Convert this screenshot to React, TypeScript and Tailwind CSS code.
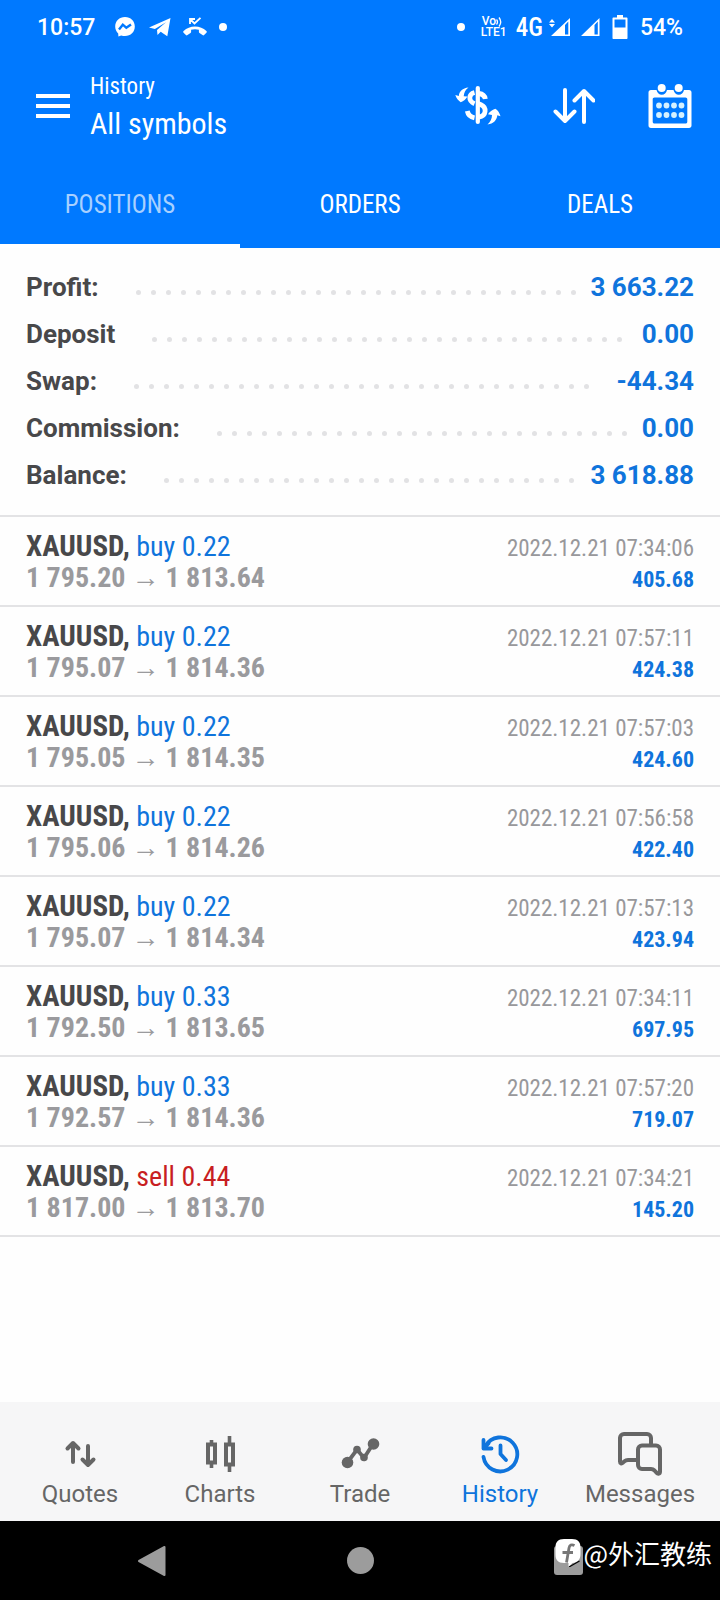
import React from "react";

type Deal = {
  side: "buy" | "sell";
  volume: string;
  open: string;
  close: string;
  time: string;
  profit: string;
};

const summary = [
  { label: "Profit:", value: "3 663.22" },
  { label: "Deposit", value: "0.00" },
  { label: "Swap:", value: "-44.34" },
  { label: "Commission:", value: "0.00" },
  { label: "Balance:", value: "3 618.88" },
];

const deals: Deal[] = [
  { side: "buy", volume: "0.22", open: "1 795.20", close: "1 813.64", time: "2022.12.21 07:34:06", profit: "405.68" },
  { side: "buy", volume: "0.22", open: "1 795.07", close: "1 814.36", time: "2022.12.21 07:57:11", profit: "424.38" },
  { side: "buy", volume: "0.22", open: "1 795.05", close: "1 814.35", time: "2022.12.21 07:57:03", profit: "424.60" },
  { side: "buy", volume: "0.22", open: "1 795.06", close: "1 814.26", time: "2022.12.21 07:56:58", profit: "422.40" },
  { side: "buy", volume: "0.22", open: "1 795.07", close: "1 814.34", time: "2022.12.21 07:57:13", profit: "423.94" },
  { side: "buy", volume: "0.33", open: "1 792.50", close: "1 813.65", time: "2022.12.21 07:34:11", profit: "697.95" },
  { side: "buy", volume: "0.33", open: "1 792.57", close: "1 814.36", time: "2022.12.21 07:57:20", profit: "719.07" },
  { side: "sell", volume: "0.44", open: "1 817.00", close: "1 813.70", time: "2022.12.21 07:34:21", profit: "145.20" },
];

function StatusBar() {
  return (
    <div className="flex h-[54px] items-center justify-between px-[37px] text-[23px] font-medium leading-none">
      <div className="flex items-center">
        <span>10:57</span>
        <svg className="ml-5 h-5 w-5" viewBox="0 0 20 20" aria-hidden="true">
          <path fill="#fff" d="M10 0C4.300 0 .2 4.100.2 9.500c0 2.800 1.100 5.200 3 6.900l.2 3.200 2.800-1.200c1.200.4 2.500.6 3.800.6 5.700 0 9.800-4.100 9.800-9.500S15.700 0 10 0Z" />
          <path d="m4 12.500 3.800-4.800 3.500 3 4.700-3.300" fill="none" stroke="#0079ff" strokeWidth="2.400" />
        </svg>
        <svg className="ml-[14px] h-5 w-[22px]" viewBox="0 0 22 20" aria-hidden="true">
          <path fill="#fff" d="M0 10.600 21.500 1 18.300 19.300 11.700 14.700 8.500 18 8 12.900 17 5.200 5.900 12.100Z" />
        </svg>
        <svg className="ml-3 h-5 w-6" viewBox="0 0 24 20" aria-hidden="true">
          <path fill="#fff" d="M12 9.500c4.500 0 8.300 1.500 11.400 4.500.6.600.6 1.100 0 1.700l-2.300 2.300c-.5.500-1 .5-1.600.1l-3-2c-.4-.3-.6-.6-.6-1.100v-2.200a12.500 12.500 0 0 0-7.800 0V15c0 .5-.2.800-.6 1.100l-3 2c-.6.4-1.100.4-1.600-.1L.6 15.700c-.6-.6-.6-1.100 0-1.700C3.700 11 7.500 9.500 12 9.500Z" />
          <path d="M7 7V2h5M7.500 2.500 11.500 6.500 17.500.800" fill="none" stroke="#fff" strokeWidth="1.800" />
        </svg>
        <span className="ml-3 h-2 w-2 rounded-full bg-white" />
      </div>
      <div className="flex items-center">
        <span className="h-2 w-2 rounded-full bg-white" />
        <span className="ml-4 flex w-[26px] flex-col text-[12px] font-medium leading-[11px]">
          <span className="flex items-center pl-[1px]">
            Vo
            <svg className="h-[10px] w-[6px]" viewBox="0 0 6 10" fill="none" stroke="#fff" strokeWidth="1.300" aria-hidden="true">
              <path d="M.5 2.500Q2.500 5 .5 7.500M3 .5Q6.500 5 3 9.500" />
            </svg>
          </span>
          <span className="whitespace-nowrap">LTE1</span>
        </span>
        <span className="ml-[9px] font-['Roboto_Condensed',Roboto,sans-serif] text-[25px]">4G</span>
        <svg className="ml-[6px] h-5 w-[22px]" viewBox="0 0 22 20" aria-hidden="true">
          <path fill="#fff" d="m3 2 3 3.500H0ZM3 10.500 0 7h6Z" />
          <path fill="#fff" fillRule="evenodd" d="M21 1v18H2ZM19.300 4.500 16 8v9.500h3.300Z" />
        </svg>
        <svg className="ml-[9px] h-5 w-5" viewBox="0 0 20 20" aria-hidden="true">
          <path fill="#fff" fillRule="evenodd" d="M19.500 1v18H1ZM17.800 4.500 14.500 8v9.500h3.300Z" />
        </svg>
        <svg className="ml-3 h-6 w-4" viewBox="0 0 16 24" aria-hidden="true">
          <path fill="#fff" fillRule="evenodd" d="M5 0h6v2.500h3.500c.6 0 1 .4 1 1V23c0 .6-.4 1-1 1h-13c-.6 0-1-.4-1-1V3.500c0-.6.400-1 1-1H5ZM2.500 4.500v8h11v-8Z" />
        </svg>
        <span className="ml-3">54%</span>
      </div>
    </div>
  );
}

function AppBar() {
  return (
    <header className="flex h-[104px] items-center justify-between pl-9 pr-7 font-['Roboto_Condensed',Roboto,sans-serif]">
      <div className="flex items-center">
        <button type="button" aria-label="Menu" className="flex w-[34px] flex-col gap-[6px]">
          <span className="h-1 bg-white" />
          <span className="h-1 bg-white" />
          <span className="h-1 bg-white" />
        </button>
        <div className="ml-5 flex flex-col pt-1">
          <span className="text-[23px] leading-8">History</span>
          <h1 className="text-[30px] leading-[42px]">All symbols</h1>
        </div>
      </div>
      <div className="flex items-center">
        <button type="button" aria-label="Currency">
          <svg className="h-11 w-[46px]" viewBox="0 0 46 44" aria-hidden="true">
            <g fill="none" stroke="#fff" strokeWidth="4.800">
              <path d="M19.500 8.500C13.500 10 13 17 19.500 19.800" />
              <path d="M24 9.500c3.500.5 5.800 2.300 6.300 5.500" />
              <path d="M23 19.500l3 1.200c6 2.700 5.500 11.300-2 12.300" />
              <path d="M12.300 27c.7 3.800 3.200 6 7.200 6.800" />
            </g>
            <path d="M22.800 4v34" stroke="#fff" strokeWidth="4.200" strokeLinecap="round" />
            <path fill="#fff" d="M13.500 3.500C7.500 4 4.200 7.500 3.800 12L.3 11c1 3.200 3 5.600 5.400 7.200 3-1.200 5.300-3 6.800-5.700l-3.800-.3c.3-3.500 1.800-6.500 4.800-8.700ZM32.500 40.500c6-.8 9.500-4.500 9.800-9.300l3.200 1c-.8-3.300-2.700-6-5.200-7.500-3.200 1-5.600 3-7.300 5.500l4 .8c0 3.700-1.700 7-4.500 9.500Z" />
          </svg>
        </button>
        <button type="button" aria-label="Sort" className="ml-[52px]">
          <svg className="h-9 w-[42px]" viewBox="0 0 42 36" fill="none" stroke="#fff" strokeWidth="4" strokeLinecap="round" strokeLinejoin="round" aria-hidden="true">
            <path d="M12 2v31M2.500 23.500 12 33l9.500-9.500M31 34V3M21.500 12.500 31 3l9.500 9.500" />
          </svg>
        </button>
        <button type="button" aria-label="Calendar" className="ml-[53px]">
          <svg className="h-11 w-11" viewBox="0 0 44 44" aria-hidden="true">
            <path fill="#fff" fillRule="evenodd" d="M3 6h5.500c.8 3.200 2.700 4.800 5.300 4.800S18.300 9.200 19 6h6.500c.8 3.200 2.700 4.800 5.300 4.800S35.300 9.200 36 6h5c1.600 0 2.500 1 2.500 2.500v33c0 1.600-1 2.500-2.500 2.500H3C1.400 44 .5 43 .5 41.500v-33C.5 7 1.400 6 3 6Zm3.500 7.500c-1 0-1.800.7-1.800 1.800v22.500c0 1 .8 1.800 1.800 1.800h31c1 0 1.800-.8 1.800-1.800V15.300c0-1.100-.8-1.800-1.800-1.800Z" />
            <g fill="#fff">
              <circle cx="13.700" cy="4" r="4" />
              <circle cx="30.700" cy="4" r="4" />
            </g>
            <g fill="#d5f1ff">
              {[11, 18.5, 26, 33.5].map((x) => (
                <React.Fragment key={x}>
                  <circle cx={x} cy="21.500" r="2.900" />
                  <circle cx={x} cy="31" r="2.900" />
                </React.Fragment>
              ))}
            </g>
          </svg>
        </button>
      </div>
    </header>
  );
}

function Tabs() {
  return (
    <div role="tablist" className="grid h-[90px] grid-cols-3 font-['Roboto_Condensed',Roboto,sans-serif] text-[25px]">
      <button type="button" role="tab" aria-selected="true" className="border-b-4 border-white pt-2 text-[#a8d0ff]">
        POSITIONS
      </button>
      <button type="button" role="tab" aria-selected="false" className="pt-1">ORDERS</button>
      <button type="button" role="tab" aria-selected="false" className="pt-1">DEALS</button>
    </div>
  );
}

function Summary() {
  return (
    <dl className="py-4 text-[26px] font-bold leading-[47px]">
      {summary.map((row) => (
        <div key={row.label} className="flex items-center px-[26px]">
          <dt className="text-[#48484a]">{row.label}</dt>
          <div aria-hidden="true" className="ml-8 mr-2 mt-[10px] flex h-[5px] flex-1 flex-wrap overflow-hidden">
            {Array.from({ length: 36 }, (_, i) => (
              <span key={i} className="flex w-[15px] justify-center">
                <span className="h-[5px] w-[5px] rounded-full bg-[#e2e2e4]" />
              </span>
            ))}
          </div>
          <dd className="text-[#0f74dc]">{row.value}</dd>
        </div>
      ))}
    </dl>
  );
}

function DealRow({ deal }: { deal: Deal }) {
  return (
    <li className="border-b-2 border-[#e3e3e5] px-[26px] pb-[11px] pt-[13px] font-['Roboto_Condensed',Roboto,sans-serif] text-[28px] leading-8">
      <div className="flex h-8 items-baseline justify-between">
        <span>
          <strong className="text-[29px] font-bold text-[#48484a]">XAUUSD,</strong>{" "}
          <span className={deal.side === "buy" ? "text-[#0f74dc]" : "text-[#c81e22]"}>
            {deal.side} {deal.volume}
          </span>
        </span>
        <time className="text-[23px] leading-8 text-[#98989b]">{deal.time}</time>
      </div>
      <div className="flex h-8 items-baseline justify-between font-bold">
        <span className="flex items-baseline text-[#9a9a9d]">
          {deal.open}
          <span className="mx-[6px] font-['Liberation_Sans',sans-serif] font-normal">→</span>
          {deal.close}
        </span>
        <span className="text-[22px] leading-8 text-[#0f74dc]">{deal.profit}</span>
      </div>
    </li>
  );
}

const navItems = [
  {
    label: "Quotes",
    icon: (
      <svg className="h-[46px] w-[46px]" viewBox="0 0 46 46" fill="none" stroke="currentColor" strokeWidth="4" strokeLinecap="round" strokeLinejoin="round" aria-hidden="true">
        <path d="M16 30V11M10.500 16.500 16 11l5.500 5.500M31 14v19M25.500 27.500 31 33l5.500-5.500" />
      </svg>
    ),
  },
  {
    label: "Charts",
    icon: (
      <svg className="h-[46px] w-[46px]" viewBox="0 0 46 46" fill="none" stroke="currentColor" aria-hidden="true">
        <path d="M11 12.500h7v18h-7ZM29 12.500h7v20h-7Z" strokeWidth="4" />
        <path d="M14.500 8v4M14.500 32v4M32.500 4v8M32.500 34v6" strokeWidth="3.600" />
      </svg>
    ),
  },
  {
    label: "Trade",
    icon: (
      <svg className="h-[46px] w-[46px]" viewBox="0 0 46 46" fill="currentColor" aria-hidden="true">
        <path d="M10 31 20 17.500 27 26 36 12" fill="none" stroke="currentColor" strokeWidth="3.800" />
        <circle cx="10.500" cy="30.500" r="5.800" />
        <circle cx="20" cy="17.500" r="3.800" />
        <circle cx="27" cy="25.500" r="3.800" />
        <circle cx="36.500" cy="12" r="5.800" />
      </svg>
    ),
  },
  {
    label: "History",
    icon: (
      <svg className="h-[46px] w-[46px]" viewBox="0 0 46 46" fill="none" stroke="currentColor" strokeWidth="3.800" strokeLinecap="round" strokeLinejoin="round" aria-hidden="true">
        <path d="M6.500 25A17 17 0 1 0 8.500 14" />
        <path d="M6.500 8v8.500h8M6.500 16.500l5-5" />
        <path d="M23.500 13.500V22l5.500 6" />
      </svg>
    ),
  },
  {
    label: "Messages",
    icon: (
      <svg className="h-[46px] w-[46px]" viewBox="0 0 46 46" fill="none" stroke="currentColor" strokeWidth="4" strokeLinecap="round" strokeLinejoin="round" aria-hidden="true">
        <path d="M34 12V6a4 4 0 0 0-4-4H7a4 4 0 0 0-4 4v23.500c0 2 1.500 2.500 3 1l1.500-1.300c1-.9 2-1.200 3.500-1.200h9" />
        <path d="M25 13.500h14a4 4 0 0 1 4 4v22c0 2.500-2 3-3.500 1.200l-2-2.200c-1-1-1.800-1.500-3.500-1.500h-9a4 4 0 0 1-4-4v-15.500a4 4 0 0 1 4-4Z" />
      </svg>
    ),
  },
];

function BottomNav() {
  return (
    <nav className="grid grid-cols-5 bg-[#f6f6f7] px-[10px] pb-[11px] pt-[30px] text-[#666]">
      {navItems.map((item) => (
        <a
          key={item.label}
          href={"#" + item.label.toLowerCase()}
          className={"flex flex-col items-center text-2xl leading-8 " + (item.label === "History" ? "text-[#0f74dc]" : "")}
        >
          {item.icon}
          {item.label}
        </a>
      ))}
    </nav>
  );
}

function SystemBar() {
  return (
    <div className="relative grid h-[79px] grid-cols-3 items-center justify-items-center bg-black px-12">
      <button type="button" aria-label="Back">
        <svg className="h-8 w-[30px]" viewBox="0 0 30 32" aria-hidden="true">
          <path d="M27.500 2v28L2 16Z" fill="#9c9c9c" stroke="#9c9c9c" strokeWidth="2" strokeLinejoin="round" />
        </svg>
      </button>
      <button type="button" aria-label="Home" className="h-[27px] w-[27px] rounded-full bg-[#9c9c9c]" />
      <button type="button" aria-label="Recent apps" className="h-[29px] w-[29px] rounded-[3px] bg-[#9c9c9c]" />
      <div className="absolute right-2 top-4 flex items-center gap-[2px] font-['Noto_Sans_CJK_SC',sans-serif] text-[26px] leading-8 text-white">
        <svg className="h-7 w-[26px]" viewBox="0 0 26 28" aria-hidden="true">
          <path d="M9 0h8c6 0 8.500 3 8.500 8.500V15c0 6-3 8.500-8 9l-4 4v-4H9c-6 0-8.500-3-8.500-8.500v-7C.5 3 3 0 9 0Z" fill="#fff" />
          <path d="M14 28 24.500 22" stroke="#000" strokeWidth="1.200" />
          <path d="M19.500 6.500c-3-1.500-5-.5-5.500 2.500L11.500 23.500M7.500 13.500H18" fill="none" stroke="#777" strokeWidth="2.800" />
        </svg>
        <span>@外汇教练</span>
      </div>
    </div>
  );
}

export default function App() {
  return (
    <div className="flex min-h-screen flex-col bg-[#fefefe] font-[Roboto,'Noto_Sans',sans-serif]">
      <div className="bg-[#0079ff] text-white">
        <StatusBar />
        <AppBar />
        <Tabs />
      </div>
      <main className="flex-1">
        <Summary />
        <ul className="border-t-2 border-[#e3e3e5]">
          {deals.map((deal) => (
            <DealRow key={deal.time} deal={deal} />
          ))}
        </ul>
      </main>
      <BottomNav />
      <SystemBar />
    </div>
  );
}
